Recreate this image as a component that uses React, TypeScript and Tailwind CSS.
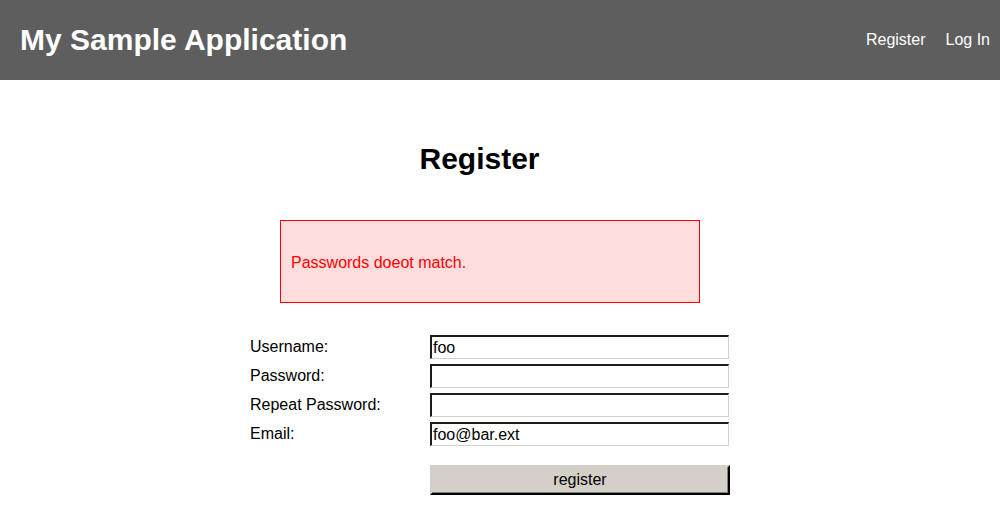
import React from "react";

export default function App() {
  const font = { fontFamily: '"Liberation Sans", Arial, sans-serif' };
  const rows = [
    { label: "Username:", value: "foo" },
    { label: "Password:", value: "" },
    { label: "Repeat Password:", value: "" },
    { label: "Email:", value: "foo@bar.ext" },
  ];
  return (
    <div className="w-[1000px] h-[531px] bg-white text-black" style={font}>
      <header className="h-[80px] bg-[#5e5e5e] flex items-center justify-between pl-[20px] pr-[10px]">
        <h1 className="text-[30px] font-bold text-white leading-none">My Sample Application</h1>
        <nav className="flex gap-[20px] text-[16px] text-white">
          <a>Register</a>
          <a>Log In</a>
        </nav>
      </header>
      <main className="flex flex-col">
        <h2 className="text-[30px] font-bold text-center leading-none mt-[64px] pr-[41px]">Register</h2>
        <div className="ml-[280px] mt-[46px] w-[420px] h-[83px] border border-[#ff0000] bg-[#ffdddd] flex items-center px-[10px] pt-[2px]">
          <p className="text-[16px] text-[#ff0000]">Passwords doeot match.</p>
        </div>
        <div className="ml-[250px] mt-[32px] flex flex-col gap-[5px]">
          {rows.map((r) => (
            <div key={r.label} className="flex items-center h-[24px]">
              <span className="w-[180px] text-[16px]">{r.label}</span>
              <div className="w-[299px] h-[24px] bg-white border-t-2 border-l-2 border-b border-r border-t-[#1c1c1c] border-l-[#1c1c1c] border-b-[#d4d0c8] border-r-[#d4d0c8] flex items-center pl-[1px] text-[16px]">
                {r.value}
              </div>
            </div>
          ))}
          <div className="flex mt-[14px]">
            <div className="w-[180px]" />
            <button className="w-[300px] h-[30px] bg-[#d4d0c8] border-2 border-t-[#d4d0c8] border-l-[#d4d0c8] border-r-[#000] border-b-[#000] shadow-[inset_-1px_-1px_0_#808080] text-[16px] text-black" style={font}>
              register
            </button>
          </div>
        </div>
      </main>
    </div>
  );
}
